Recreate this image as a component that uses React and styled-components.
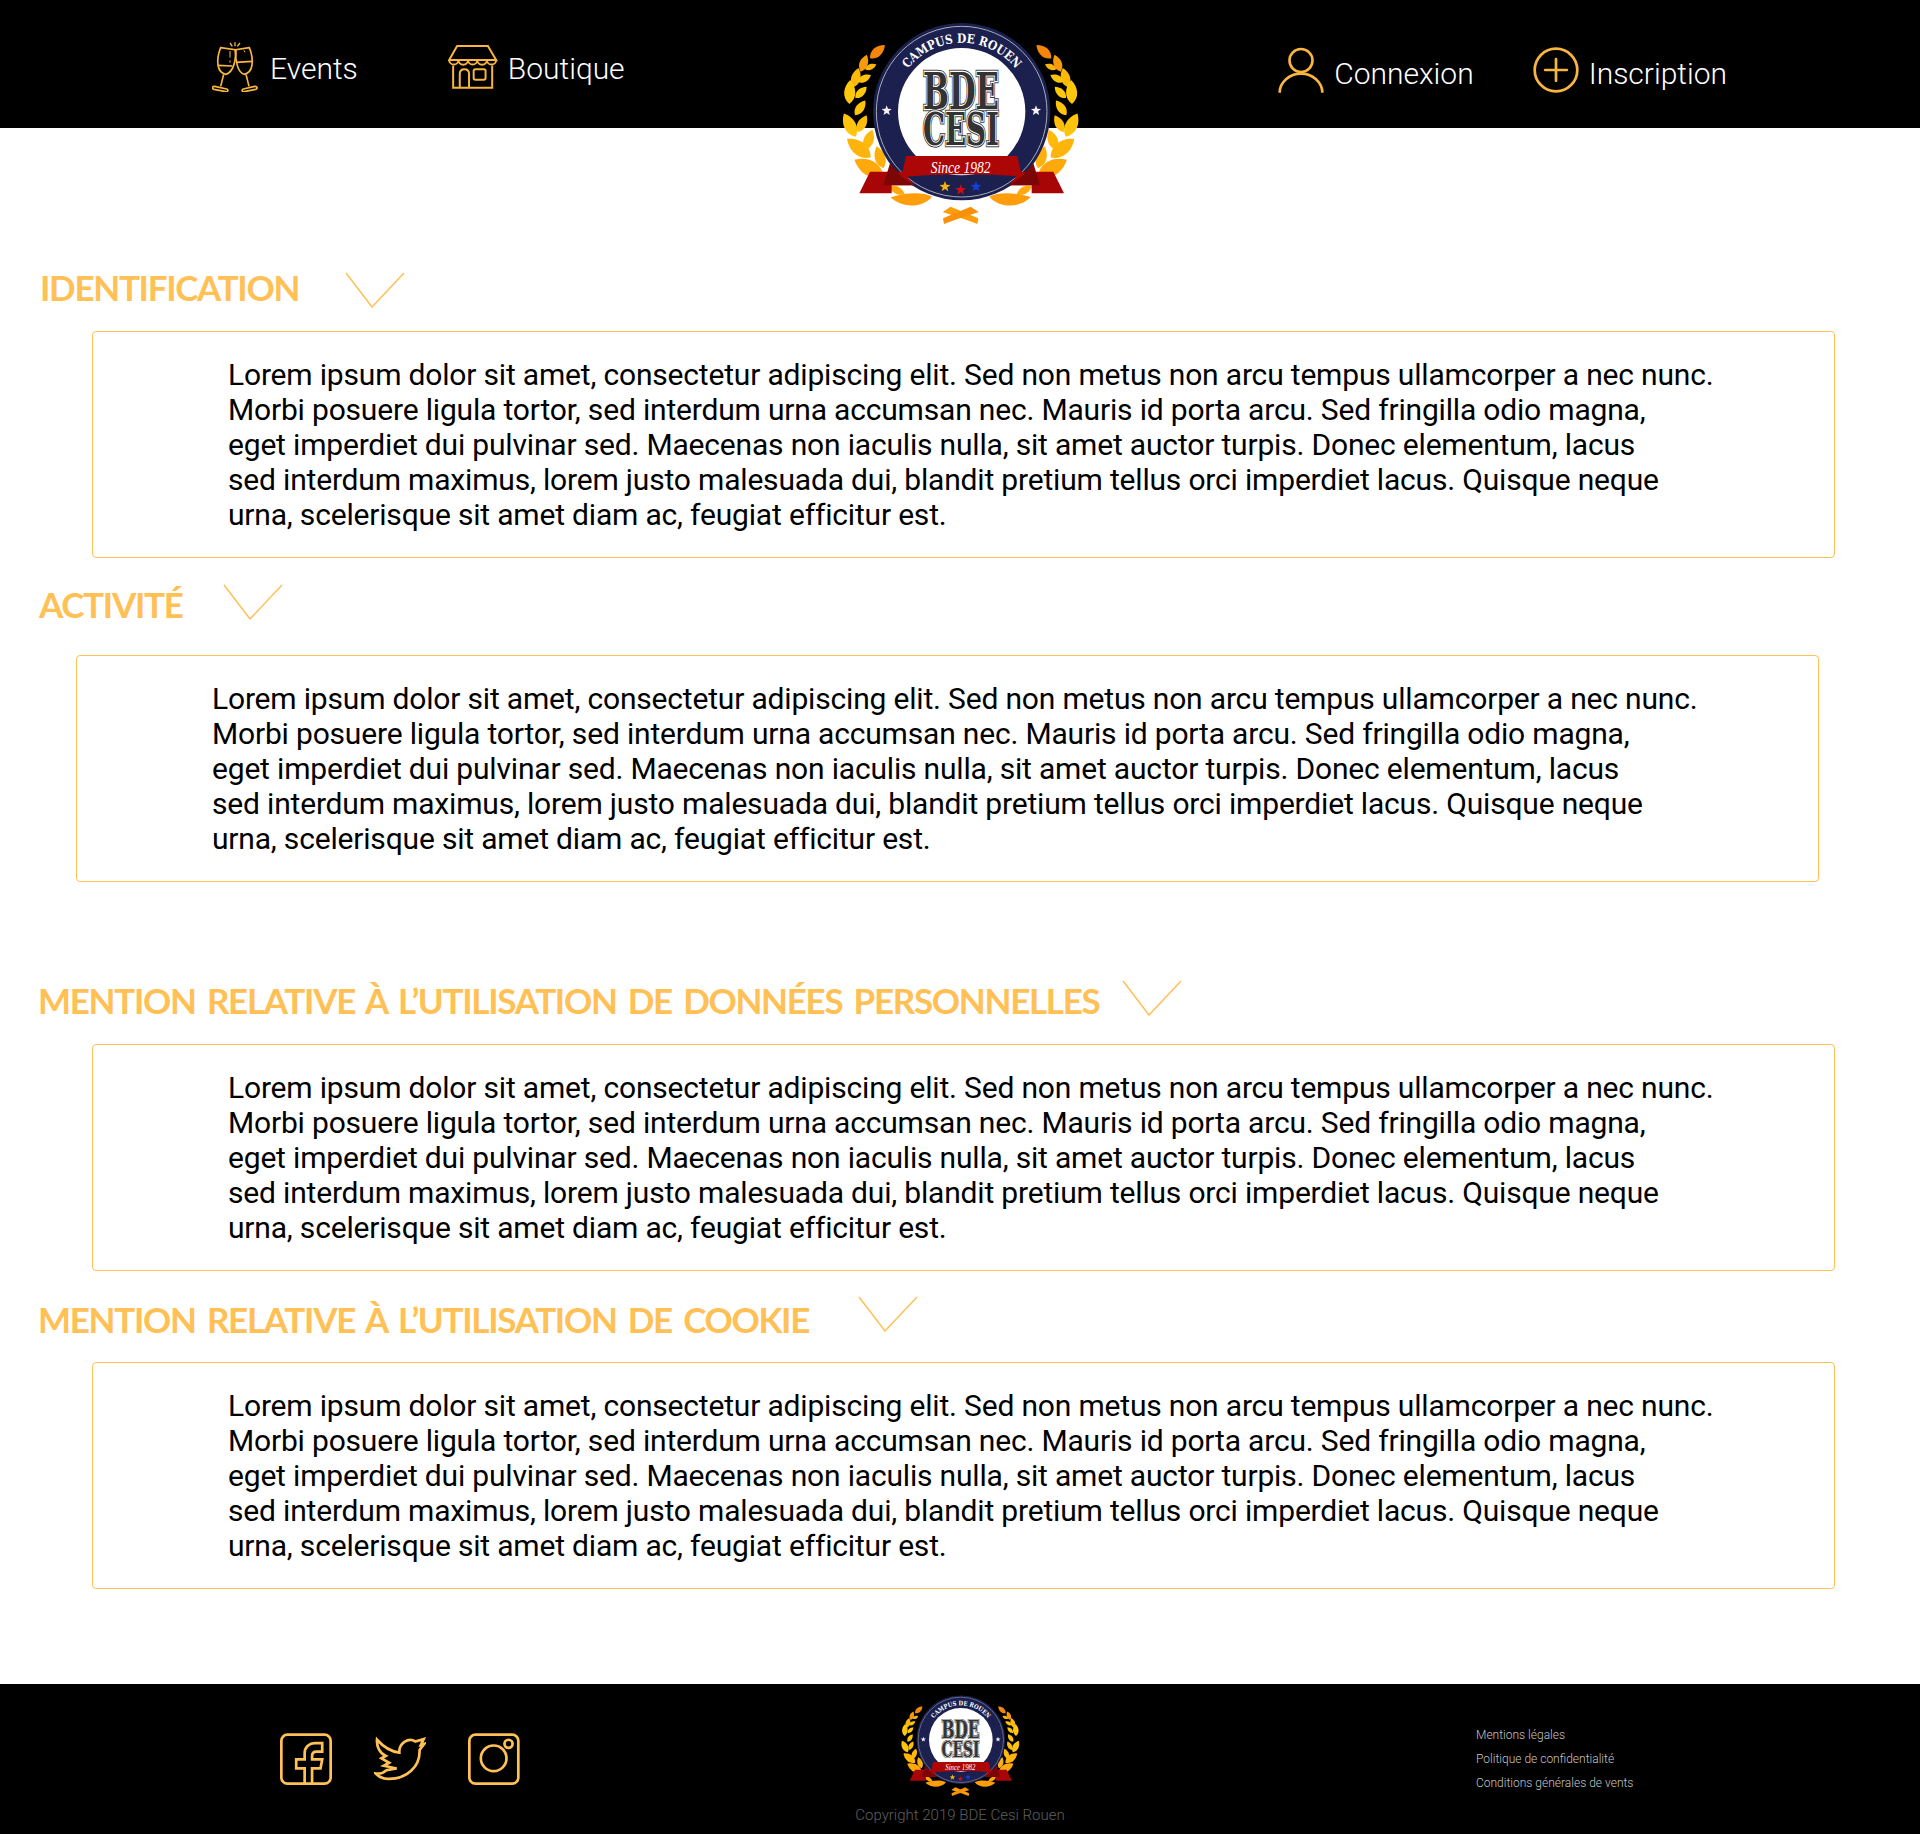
import React, { useId } from "react";
import styled, { createGlobalStyle } from "styled-components";

const GOLD = "#ffc056";
const ICON = "#f8b540";

const GlobalStyle = createGlobalStyle`
    * { box-sizing: border-box; }
    html, body { margin: 0; padding: 0; background: #ffffff; }
    body { font-family: Roboto, "Liberation Sans", sans-serif; }
`;

const LOREM = [
    "Lorem ipsum dolor sit amet, consectetur adipiscing elit. Sed non metus non arcu tempus ullamcorper a nec nunc.",
    "Morbi posuere ligula tortor, sed interdum urna accumsan nec. Mauris id porta arcu. Sed fringilla odio magna,",
    "eget imperdiet dui pulvinar sed. Maecenas non iaculis nulla, sit amet auctor turpis. Donec elementum, lacus",
    "sed interdum maximus, lorem justo malesuada dui, blandit pretium tellus orci imperdiet lacus. Quisque neque",
    "urna, scelerisque sit amet diam ac, feugiat efficitur est.",
];

const SECTIONS = [
    { title: "IDENTIFICATION", top: 144, left: 40, chevron: 46, gap: 23, indent: 92, shift: -3 },
    { title: "ACTIVITÉ", top: 26, left: 39, chevron: 40, gap: 35, indent: 76, shift: 2 },
    { title: "MENTION RELATIVE À L’UTILISATION DE DONNÉES PERSONNELLES", top: 98, left: 38, chevron: 23, gap: 28, indent: 92, shift: 2 },
    { title: "MENTION RELATIVE À L’UTILISATION DE COOKIE", top: 25, left: 38, chevron: 49, gap: 30, indent: 92, shift: 5 },
];

const LEAVES = [
    { x: 150, y: 175, r: 48, s: 1, c: "#f5860c" },
    { x: 122, y: 215, r: 20, s: 0.9, c: "#f79a0c" },
    { x: 135, y: 208, r: 66, s: 0.62, c: "#fbb40c" },
    { x: 100, y: 262, r: 15, s: 1, c: "#fdb80c" },
    { x: 113, y: 246, r: 62, s: 0.75, c: "#fdc20c" },
    { x: 88, y: 312, r: 2, s: 1.2, c: "#ffc80c" },
    { x: 106, y: 294, r: 45, s: 0.8, c: "#ffc80c" },
    { x: 107, y: 410, r: -27, s: 1.3, c: "#ffc40c" },
    { x: 105, y: 346, r: 35, s: 0.9, c: "#ffc40c" },
    { x: 113, y: 396, r: 28, s: 0.95, c: "#ffbd0c" },
    { x: 135, y: 450, r: 20, s: 1.08, c: "#ffb80c" },
    { x: 152, y: 472, r: -52, s: 1.5, c: "#ffb40c" },
    { x: 190, y: 505, r: -17, s: 1.15, c: "#ffb00c" },
    { x: 190, y: 527, r: -61, s: 1.65, c: "#ffa90c" },
];

function star(cx, cy, r) {
    const pts = [];
    for (let i = 0; i < 10; i++) {
        const a = -Math.PI / 2 + (i * Math.PI) / 5;
        const d = i % 2 === 0 ? r : r * 0.42;
        pts.push(`${(cx + d * Math.cos(a)).toFixed(1)},${(cy + d * Math.sin(a)).toFixed(1)}`);
    }
    return pts.join(" ");
}

function Laurel() {
    return (
        <g>
            {LEAVES.map((l, i) => (
                <path
                    key={i}
                    d="M0 0 C-20 -16 -17 -42 0 -60 C17 -42 20 -16 0 0Z"
                    fill={l.c}
                    transform={`translate(${l.x} ${l.y}) rotate(${l.r}) scale(${l.s})`}
                />
            ))}
            <path d="M212 592 C250 578 310 574 336 590 C310 622 250 628 212 592Z" fill="#ff9d0a" />
            <path d="M208 560 C225 552 245 560 254 582 C238 588 218 582 208 560Z" fill="#ffa90c" />
        </g>
    );
}

function Logo({ className }) {
    const id = useId().replace(/[^a-zA-Z0-9]/g, "");
    return (
        <svg className={className} viewBox="0 0 840 720" role="img">
            <defs>
                <path id={`${id}arc`} d="M231 265 A206 206 0 0 1 619 265" />
                <text id={`${id}bde`} x="423" y="326" textAnchor="middle" fontFamily="'DejaVu Serif', serif" fontWeight="700" fontSize="150" textLength="228" lengthAdjust="spacingAndGlyphs">BDE</text>
                <text id={`${id}cesi`} x="423" y="436" textAnchor="middle" fontFamily="'DejaVu Serif', serif" fontWeight="700" fontSize="136" textLength="228" lengthAdjust="spacingAndGlyphs">CESI</text>
            </defs>
            <Laurel />
            <g transform="translate(844 0) scale(-1 1)">
                <Laurel />
            </g>
            <polygon points="368,636 392,620 475,655 472,672 440,660" fill="#ff9d0a" />
            <polygon points="476,636 452,620 369,655 372,672 404,660" fill="#f9900a" />

            <circle cx="425" cy="335" r="266" fill="#1b204f" />
            <circle cx="425" cy="335" r="256" fill="none" stroke="#a9abb8" strokeWidth="3" />
            <circle cx="425" cy="335" r="191" fill="#ffffff" />
            <text fontFamily="'DejaVu Serif', serif" fontWeight="700" fontSize="38" fill="#ffffff">
                <textPath href={`#${id}arc`} startOffset="50%" textAnchor="middle" textLength="372" lengthAdjust="spacingAndGlyphs">CAMPUS DE ROUEN</textPath>
            </text>
            <polygon points={star(200, 332, 16)} fill="#f2f2f6" />
            <polygon points={star(648, 332, 16)} fill="#f2f2f6" />

            <use href={`#${id}bde`} fill="none" stroke="#333333" strokeWidth="13" />
            <use href={`#${id}bde`} fill="none" stroke="#ffffff" strokeWidth="7" />
            <use href={`#${id}bde`} fill="#333333" />
            <use href={`#${id}cesi`} fill="none" stroke="#333333" strokeWidth="13" />
            <use href={`#${id}cesi`} fill="none" stroke="#ffffff" strokeWidth="7" />
            <use href={`#${id}cesi`} fill="#333333" />

            <polygon points="118,580 150,515 250,515 282,556 215,556 215,580" fill="#a80606" />
            <polygon points="732,580 700,515 600,515 568,556 635,556 635,580" fill="#a80606" />
            <polygon points="210,490 245,530 282,556 190,556" fill="#7c0505" />
            <polygon points="640,490 605,530 568,556 660,556" fill="#7c0505" />
            <path d="M258 468 H592 L606 530 C500 520 350 520 244 532Z" fill="#ad0606" />
            <text x="422" y="518" textAnchor="middle" fontFamily="'Liberation Serif', serif" fontStyle="italic" fontSize="48" textLength="180" lengthAdjust="spacingAndGlyphs" fill="#ffffff">Since 1982</text>
            <polygon points={star(375, 560, 17)} fill="#f3b311" />
            <polygon points={star(422, 570, 17)} fill="#d00f14" />
            <polygon points={star(468, 560, 17)} fill="#1440d8" />
        </svg>
    );
}

function GlassesIcon() {
    return (
        <NavSvg width="46" height="50" viewBox="96 125 138 150">
            <g strokeWidth="5">
                <path d="M122 142 L165 148 C170 178 160 215 138 222 C112 218 106 182 122 142Z" />
                <path d="M208 142 L168 148 C165 178 172 215 192 222 C218 218 224 182 208 142Z" />
                <path d="M113 195 L157 197 M168 186 L216 183" />
                <path d="M131 222 L122 258 M198 222 L207 258" />
                <path d="M104 258 L140 266 C146 268 144 276 137 274 L102 267 C95 265 97 257 104 258Z" />
                <path d="M224 258 L190 266 C184 268 186 276 193 274 L227 267 C234 265 232 257 224 258Z" />
                <path d="M150 152 L150 172 M150 180 L150 187 M192 150 L195 156" strokeWidth="3" />
                <path d="M150 128 L157 138 M165 126 L165 138 M180 128 L172 138" strokeWidth="4" />
            </g>
        </NavSvg>
    );
}

function ShopIcon() {
    return (
        <NavSvg width="50" height="44" viewBox="805 135 150 133">
            <g strokeWidth="6">
                <path d="M832 138 H925 L950 180 H808Z" />
                <path d="M808 180 A14 14 0 0 0 836 180 A14 14 0 0 0 865 180 A14 14 0 0 0 893 180 A14 14 0 0 0 922 180 A14 14 0 0 0 950 180" />
                <path d="M820 197 V264 H938 V197" />
                <path d="M840 264 V222 Q840 208 854 208 Q868 208 868 222 V264" />
                <rect x="882" y="208" width="36" height="32" rx="5" />
            </g>
        </NavSvg>
    );
}

function UserIcon() {
    return (
        <NavSvg width="46" height="46" viewBox="85 75 140 140">
            <g strokeWidth="8">
                <circle cx="155" cy="116" r="35" />
                <path d="M90 214 C90 182 120 156 155 156 C190 156 220 182 220 214" />
            </g>
        </NavSvg>
    );
}

function PlusIcon() {
    return (
        <NavSvg width="46" height="46" viewBox="848 78 136 136">
            <g strokeWidth="8" strokeLinecap="round">
                <circle cx="916" cy="146" r="63" />
                <path d="M884 146 H948 M916 114 V178" />
            </g>
        </NavSvg>
    );
}

function FacebookIcon() {
    return (
        <SocialSvg viewBox="62 100 154 154">
            <rect x="66" y="105" width="146" height="145" rx="18" />
            <path d="M135 250 V205 H110 V178 H135 V160 C135 140 150 130 165 130 H187 V155 H170 C160 155 157 160 157 168 V178 H187 L182 205 H157 V250" />
        </SocialSvg>
    );
}

function TwitterIcon() {
    return (
        <SocialSvg viewBox="343 100 154 154">
            <path d="M352 120 C370 140 390 155 418 158 C416 130 445 112 465 125 L490 118 L482 135 L492 132 L478 150 C480 200 440 237 385 236 C370 236 358 230 348 220 C360 222 372 218 380 210 L410 205 L372 197 L388 188 L365 175 L378 168 C360 160 350 140 352 120Z" />
        </SocialSvg>
    );
}

function InstagramIcon() {
    return (
        <SocialSvg viewBox="626 100 154 154">
            <rect x="630" y="105" width="145" height="145" rx="18" />
            <circle cx="702" cy="175" r="38" />
            <circle cx="746" cy="132" r="12" />
        </SocialSvg>
    );
}

function Chevron() {
    return (
        <ChevronSvg width="60" height="36" viewBox="0 0 60 36">
            <polyline points="1,1 27,35 59,1" />
        </ChevronSvg>
    );
}

export default function App() {
    return (
        <Page>
            <GlobalStyle />
            <Header>
                <NavGroup $top={42} $gap={90}>
                    <NavItem $gap={12}><GlassesIcon /><NavLabel $shift={2}>Events</NavLabel></NavItem>
                    <NavItem $gap={10}><ShopIcon /><NavLabel $shift={2}>Boutique</NavLabel></NavItem>
                </NavGroup>
                <HeaderLogo />
                <NavGroup $top={47} $gap={59}>
                    <NavItem $gap={10}><UserIcon /><NavLabel $shift={4}>Connexion</NavLabel></NavItem>
                    <NavItem $gap={10}><PlusIcon /><NavLabel $shift={4}>Inscription</NavLabel></NavItem>
                </NavGroup>
            </Header>
            <Main>
                {SECTIONS.map(s => (
                    <Section key={s.title} $top={s.top}>
                        <TitleRow $left={s.left} $chevron={s.chevron}>
                            <Title $shift={s.shift}>{s.title}</Title>
                            <Chevron />
                        </TitleRow>
                        <Box $gap={s.gap} $indent={s.indent}>
                            {LOREM.map(line => <Line key={line}>{line}</Line>)}
                        </Box>
                    </Section>
                ))}
            </Main>
            <Footer>
                <Socials>
                    <FacebookIcon />
                    <TwitterIcon />
                    <InstagramIcon />
                </Socials>
                <FooterCenter>
                    <FooterLogo />
                    <Copyright>Copyright 2019 BDE Cesi Rouen</Copyright>
                </FooterCenter>
                <FooterLinks>
                    <span>Mentions légales</span>
                    <span>Politique de confidentialité</span>
                    <span>Conditions générales de vents</span>
                </FooterLinks>
            </Footer>
        </Page>
    );
}

const Page = styled.div`
    width: 1920px;
    height: 1834px;
    display: flex;
    flex-direction: column;
    overflow: hidden;
    background: #ffffff;
`;
const Header = styled.header`
    height: 128px;
    display: flex;
    justify-content: space-between;
    align-items: flex-start;
    padding: 0 193px 0 212px;
    background: #000000;
    position: relative;
    z-index: 2;
`;
const NavGroup = styled.nav`
    display: flex;
    gap: ${p => p.$gap}px;
    margin-top: ${p => p.$top}px;
`;
const NavItem = styled.a`
    display: flex;
    align-items: center;
    gap: ${p => p.$gap}px;
    font-size: 30px;
    font-weight: 300;
    color: #ffffff;
    line-height: 46px;
`;
const NavLabel = styled.span`
    margin: ${p => p.$shift}px 0 ${p => -p.$shift}px;
`;
const NavSvg = styled.svg`
    fill: none;
    stroke: ${ICON};
    flex: none;
`;
const HeaderLogo = styled(Logo)`
    position: absolute;
    top: 0;
    left: 820px;
    width: 280px;
    height: 240px;
`;
const Main = styled.main`
    flex: 1;
    display: flex;
    flex-direction: column;
`;
const Section = styled.section`
    margin-top: ${p => p.$top}px;
`;
const TitleRow = styled.div`
    height: 36px;
    display: flex;
    align-items: center;
    gap: ${p => p.$chevron}px;
    padding-left: ${p => p.$left}px;
`;
const Title = styled.h2`
    margin: ${p => p.$shift}px 0 ${p => -p.$shift}px;
    font-family: Lato, "Liberation Sans", sans-serif;
    font-size: 35px;
    font-weight: 700;
    line-height: 36px;
    letter-spacing: -1.3px;
    word-spacing: 4px;
    color: ${GOLD};
    white-space: nowrap;
`;
const ChevronSvg = styled.svg`
    fill: none;
    stroke: ${GOLD};
    stroke-width: 1.5;
    flex: none;
`;
const Box = styled.div`
    width: 1743px;
    height: 227px;
    margin-top: ${p => p.$gap}px;
    margin-left: ${p => p.$indent}px;
    padding: 25px 0 0 135px;
    border: 1px solid ${GOLD};
    border-radius: 4px;
`;
const Line = styled.div`
    font-size: 30px;
    line-height: 35px;
    letter-spacing: -0.18px;
    color: #000000;
    white-space: nowrap;
`;
const Footer = styled.footer`
    height: 150px;
    display: grid;
    grid-template-columns: 890px 140px 1fr;
    background: #000000;
`;
const Socials = styled.div`
    display: flex;
    align-items: center;
    gap: 42px;
    padding-left: 280px;
`;
const SocialSvg = styled.svg`
    width: 52px;
    height: 52px;
    fill: none;
    stroke: ${GOLD};
    stroke-width: 8;
    flex: none;
`;
const FooterCenter = styled.div`
    display: flex;
    flex-direction: column;
    align-items: center;
`;
const FooterLogo = styled(Logo)`
    width: 140px;
    height: 120px;
    flex: none;
`;
const Copyright = styled.div`
    margin-top: 2px;
    font-size: 15px;
    font-weight: 300;
    line-height: 18px;
    color: #5f5f5f;
    white-space: nowrap;
`;
const FooterLinks = styled.div`
    display: flex;
    flex-direction: column;
    justify-content: center;
    gap: 10px;
    padding-left: 446px;
    font-size: 12px;
    font-weight: 300;
    line-height: 14px;
    color: #c4c4c4;
`;
